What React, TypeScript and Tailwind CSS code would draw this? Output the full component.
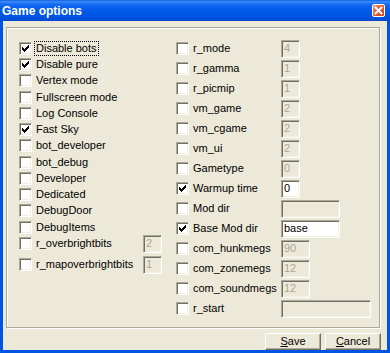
import clsx from 'clsx'

interface Option {
  label: string
  checked?: boolean
  focus?: boolean
  value?: string
  width?: string
  enabled?: boolean
  gap?: string
}

const leftOptions: Option[] = [
  { label: 'Disable bots', checked: true, focus: true },
  { label: 'Disable pure', checked: true, gap: 'mt-[3px]' },
  { label: 'Vertex mode', gap: 'mt-[3px]' },
  { label: 'Fullscreen mode', gap: 'mt-[4px]' },
  { label: 'Log Console', gap: 'mt-[3px]' },
  { label: 'Fast Sky', checked: true, gap: 'mt-[3px]' },
  { label: 'bot_developer', gap: 'mt-[3px]' },
  { label: 'bot_debug', gap: 'mt-[4px]' },
  { label: 'Developer', gap: 'mt-[3px]' },
  { label: 'Dedicated', gap: 'mt-[3px]' },
  { label: 'DebugDoor', gap: 'mt-[3px]' },
  { label: 'DebugItems', gap: 'mt-[4px]' },
  { label: 'r_overbrightbits', value: '2', width: 'w-[19px]', gap: 'mt-[3px]' },
  { label: 'r_mapoverbrightbits', value: '1', width: 'w-[19px]', gap: 'mt-[8px]' },
]

const rightOptions: Option[] = [
  { label: 'r_mode', value: '4', width: 'w-[19px]' },
  { label: 'r_gamma', value: '1', width: 'w-[19px]' },
  { label: 'r_picmip', value: '1', width: 'w-[19px]' },
  { label: 'vm_game', value: '2', width: 'w-[19px]' },
  { label: 'vm_cgame', value: '2', width: 'w-[19px]' },
  { label: 'vm_ui', value: '2', width: 'w-[19px]' },
  { label: 'Gametype', value: '0', width: 'w-[19px]' },
  { label: 'Warmup time', checked: true, value: '0', width: 'w-[19px]', enabled: true },
  { label: 'Mod dir', value: '', width: 'w-[59px]' },
  { label: 'Base Mod dir', checked: true, value: 'base', width: 'w-[59px]', enabled: true },
  { label: 'com_hunkmegs', value: '90', width: 'w-[29px]' },
  { label: 'com_zonemegs', value: '12', width: 'w-[29px]' },
  { label: 'com_soundmegs', value: '12', width: 'w-[29px]' },
  { label: 'r_start', value: '', width: 'w-[90px]' },
]

// columns of the classic 3px-thick check glyph, in 11x11 box coords
const checkCols = [
  [2, 4],
  [3, 5],
  [4, 6],
  [5, 5],
  [6, 4],
  [7, 3],
  [8, 2],
]

const sunken =
  'border border-t-[#aca899] border-l-[#aca899] border-r-white border-b-white shadow-[inset_1px_1px_0_#716f64,inset_-1px_-1px_0_#f1efe2]'

function CheckBox({ checked }: { checked?: boolean }) {
  return (
    <span className={clsx('flex size-[13px] shrink-0 bg-white', sunken)}>
      {checked && (
        <svg width="11" height="11" viewBox="0 0 11 11" shapeRendering="crispEdges">
          {checkCols.map(([x, y]) => (
            <rect key={x} x={x} y={y} width="1" height="3" fill="#000" />
          ))}
        </svg>
      )}
    </span>
  )
}

function Field({ value, width, enabled }: { value?: string; width?: string; enabled?: boolean }) {
  return (
    <span
      className={clsx(
        'flex h-[18px] shrink-0 items-center pl-[2px] leading-none',
        sunken,
        width,
        enabled ? 'bg-white text-black' : 'bg-[#ece9d8] text-[#aca899]',
      )}
    >
      {value}
    </span>
  )
}

function OptionRow({ opt, labelWidth }: { opt: Option; labelWidth: string }) {
  return (
    <div className={clsx('flex h-[13px] items-center', opt.gap)}>
      <CheckBox checked={opt.checked} />
      <span className={clsx('flex shrink-0', labelWidth)}>
        <span
          className={clsx(
            'ml-[2px] whitespace-nowrap border px-px leading-[13px]',
            opt.focus ? 'border-dotted border-black' : 'border-transparent',
          )}
        >
          {opt.label}
        </span>
      </span>
      {opt.value !== undefined && <Field value={opt.value} width={opt.width} enabled={opt.enabled} />}
    </div>
  )
}

function DialogButton({ children }: { children: React.ReactNode }) {
  return (
    <button className="flex h-[17px] w-[56px] items-center justify-center border border-t-white border-l-white border-r-[#716f64] border-b-[#716f64] bg-[#ece9d8] pb-px text-[11px] leading-none text-black shadow-[inset_-1px_-1px_0_#aca899]">
      {children}
    </button>
  )
}

export default function App() {
  return (
    <div className="flex h-[353px] w-[390px] flex-col bg-[#0054e3] font-['Liberation_Sans',Arial,sans-serif] text-[11px] text-black">
      <div className="flex h-[21px] shrink-0 items-center justify-between bg-[linear-gradient(to_bottom,#0a5de8_0%,#3d8cf6_8%,#1a6ef2_18%,#0760ee_35%,#0058e8_60%,#0053e1_85%,#0046cc_100%)] pl-[2px] pr-[5px]">
        <span className="text-[12px] font-bold leading-none text-white">Game options</span>
        <span className="flex size-[13px] items-center justify-center rounded-[2px] border border-white bg-[linear-gradient(135deg,#ef9a7c_0%,#e0623c_45%,#c2401b_100%)]">
          <svg width="9" height="9" viewBox="0 0 9 9">
            <path d="M1.5 1.5 L7.5 7.5 M7.5 1.5 L1.5 7.5" stroke="#fff" strokeWidth="1.9" strokeLinecap="square" />
          </svg>
        </span>
      </div>

      <div className="mx-[3px] mb-[3px] flex flex-1 flex-col bg-[#ece9d8]">
        <div className="ml-[3px] mt-[6px] flex h-[301px] w-[374px] border border-[#aca899] pl-[12px] pt-[14px] shadow-[1px_1px_0_#fff,inset_1px_1px_0_#fff]">
          <div className="flex w-[157px] shrink-0 flex-col">
            {leftOptions.map((opt) => (
              <OptionRow key={opt.label} opt={opt} labelWidth="w-[111px]" />
            ))}
          </div>
          <div className="flex flex-1 flex-col gap-[7px]">
            {rightOptions.map((opt) => (
              <OptionRow key={opt.label} opt={opt} labelWidth="w-[92px]" />
            ))}
          </div>
        </div>

        <div className="mt-[5px] flex justify-end gap-[4px] pr-[6px]">
          <DialogButton>
            <span className="underline underline-offset-1">S</span>ave
          </DialogButton>
          <DialogButton>
            <span className="underline underline-offset-1">C</span>ancel
          </DialogButton>
        </div>
      </div>
    </div>
  )
}
